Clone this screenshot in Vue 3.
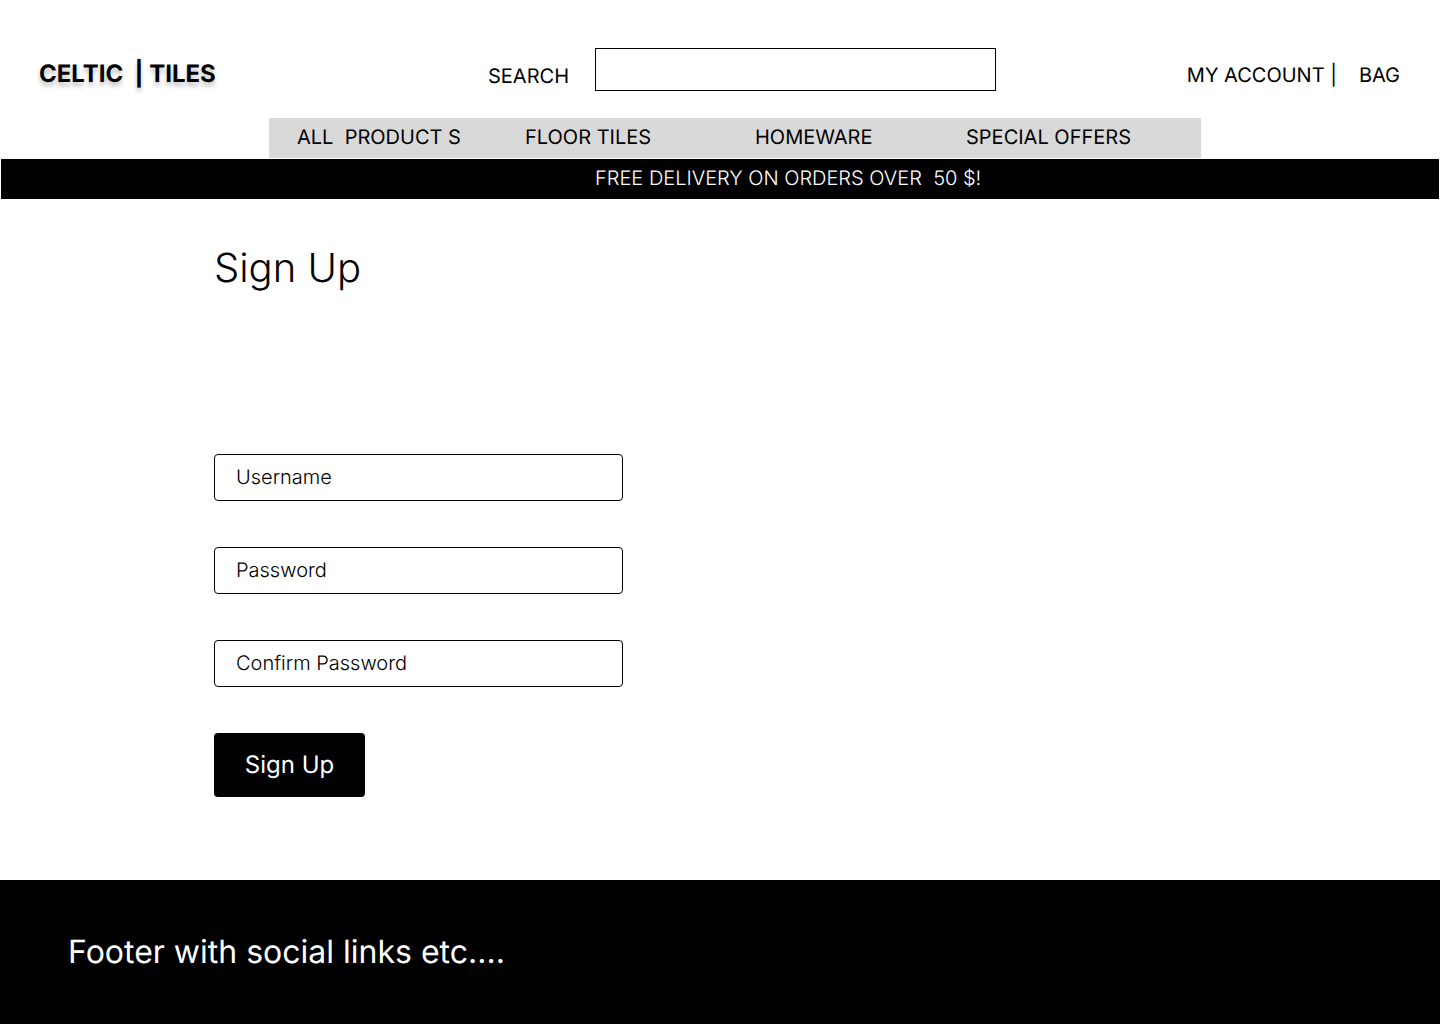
<script setup>
import { ref } from 'vue'

const search = ref('')
const username = ref('')
const password = ref('')
const confirmation = ref('')
</script>

<template>
  <div class="page">
    <header class="top">
      <a class="logo" href="#">CELTIC&nbsp; | TILES</a>
      <div class="search">
        <label for="search">SEARCH</label>
        <input id="search" v-model="search" type="search" />
      </div>
      <div class="account">
        <a href="#">MY ACCOUNT |</a>
        <a href="#">BAG</a>
      </div>
    </header>
    <nav class="menu">
      <a href="#">ALL&nbsp; PRODUCT S</a>
      <a href="#">FLOOR TILES</a>
      <a href="#">HOMEWARE</a>
      <a href="#">SPECIAL OFFERS</a>
    </nav>
    <p class="promo">FREE DELIVERY ON ORDERS OVER&nbsp; 50 $!</p>
    <main>
      <h1>Sign Up</h1>
      <form @submit.prevent>
        <input v-model="username" type="text" placeholder="Username" aria-label="Username" />
        <input v-model="password" type="password" placeholder="Password" aria-label="Password" />
        <input v-model="confirmation" type="password" placeholder="Confirm Password" aria-label="Confirm Password" />
        <button type="submit">Sign Up</button>
      </form>
    </main>
    <footer>Footer with social links etc....</footer>
  </div>
</template>

<style>
body {
  margin: 0;
  background: #fff;
}
</style>

<style scoped>
.page {
  display: flex;
  flex-direction: column;
  min-height: 100vh;
  font-family: Inter, sans-serif;
  font-size: 20px;
  line-height: 24px;
  color: #000;
  text-rendering: geometricPrecision;
}
a {
  color: inherit;
  text-decoration: none;
  white-space: nowrap;
}
input,
button {
  box-sizing: border-box;
  font-family: inherit;
  text-rendering: inherit;
}
.top {
  display: grid;
  grid-template-columns: minmax(auto, 449px) auto 1fr;
  align-items: end;
  padding: 48px 40px 27px 39px;
}
.logo {
  font-size: 24px;
  line-height: 34px;
  font-weight: 700;
  text-shadow: 0 4px 4px rgba(0, 0, 0, 0.25);
}
.search {
  display: flex;
  align-items: flex-end;
  gap: 26px;
  line-height: 30px;
}
.search input {
  width: 401px;
  height: 43px;
  padding: 0 12px;
  border: 1px solid #000;
  border-radius: 0;
  background: #fff;
  font-size: 20px;
  appearance: none;
}
.account {
  display: flex;
  justify-content: flex-end;
  gap: 22px;
  line-height: 32px;
}
.menu {
  display: grid;
  grid-template-columns: 228fr 230fr 211fr 207fr;
  margin: 0 239px 1px 269px;
  padding: 7px 28px 9px;
  background: #d9d9d9;
}
.promo {
  margin: 0 1px;
  padding: 7px 0 9px 594px;
  background: #000;
  color: #fff;
  font-weight: 300;
}
main {
  flex: 1;
  padding: 45px 214px 0;
}
h1 {
  margin: 0;
  font-size: 40px;
  line-height: 48px;
  font-weight: 300;
}
form {
  display: flex;
  flex-direction: column;
  align-items: flex-start;
  gap: 46px;
  padding: 162px 0 83px;
}
form input {
  width: 409px;
  height: 47px;
  padding: 0 21px 2px;
  border: 1px solid #000;
  border-radius: 4px;
  background: #fff;
  font-size: 20px;
  font-weight: 300;
}
form input::placeholder {
  color: #000;
  opacity: 1;
}
button {
  width: 151px;
  height: 64px;
  padding: 0 0 2px;
  border: 0;
  border-radius: 4px;
  background: #000;
  color: #fff;
  font-size: 24px;
}
footer {
  padding: 52px 68px;
  background: #000;
  color: #fff;
  font-size: 32px;
  line-height: 40px;
}
</style>
